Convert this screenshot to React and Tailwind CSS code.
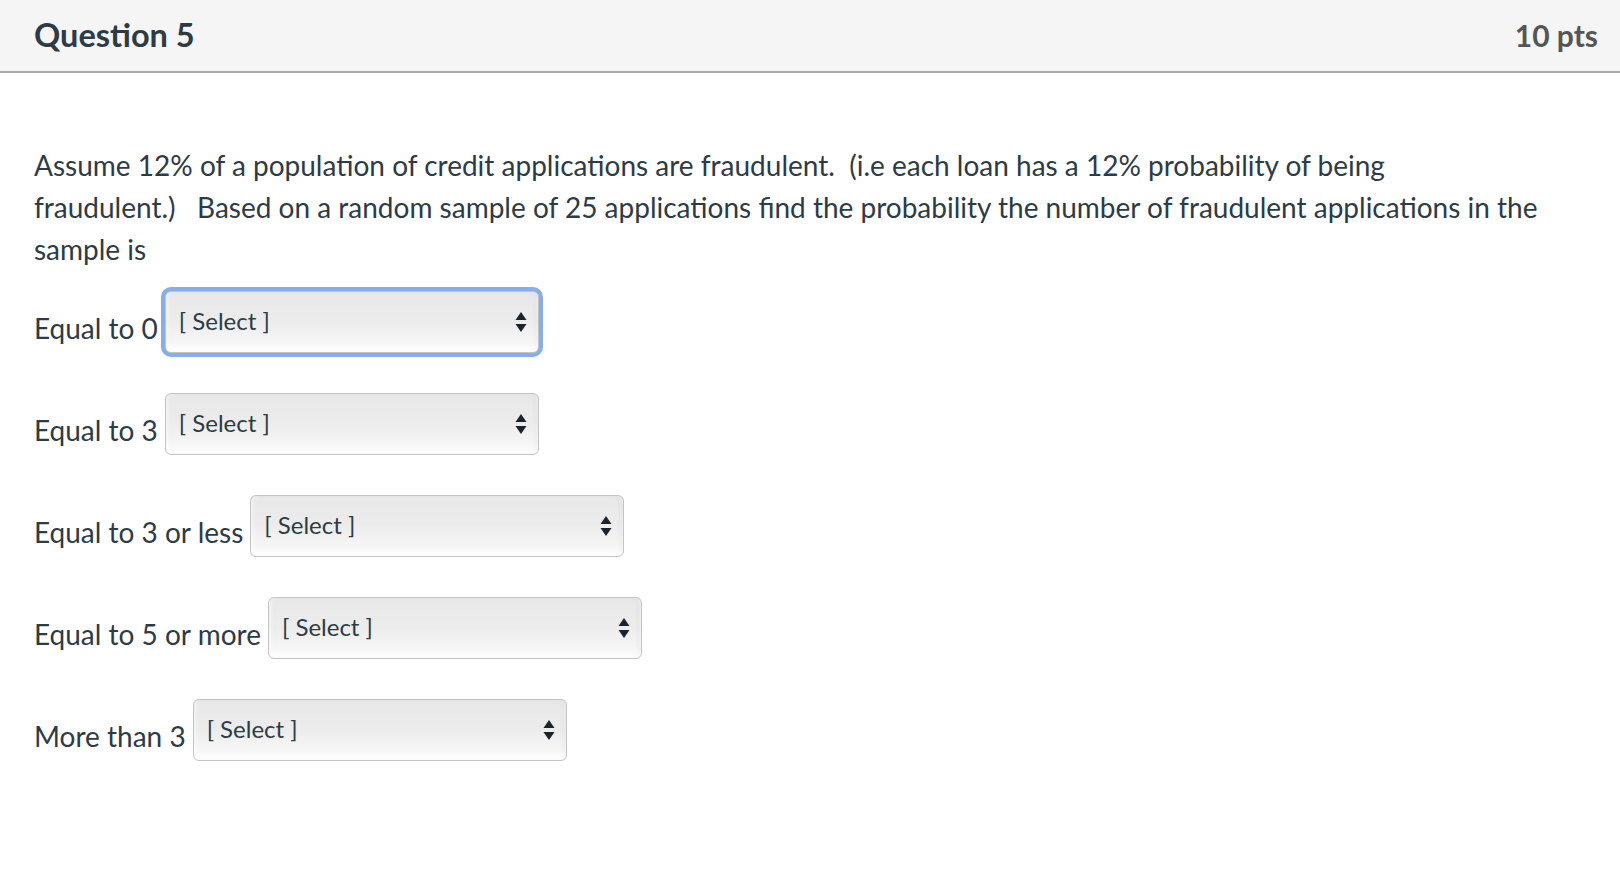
import React from 'react';

const ROWS = [
    { label: 'Equal to 0', focused: true },
    { label: 'Equal to 3' },
    { label: 'Equal to 3 or less' },
    { label: 'Equal to 5 or more' },
    { label: 'More than 3' },
];

const SortArrows = () => (
    <svg width="12" height="22" viewBox="0 0 12 22" className="shrink-0">
        <path d="M6 1 L11.5 9 L0.5 9 Z" fill="#1b242b" />
        <path d="M0.5 13 L11.5 13 L6 21 Z" fill="#1b242b" />
    </svg>
);

const FakeSelect = ({ focused }) => (
    <div className={`rounded-[10px] p-[4px] ${focused ? 'bg-[#86adf0]' : 'bg-transparent'}`}>
        <div className="w-[374px] h-[62px] flex items-center justify-between pl-[13px] pr-[11px] rounded-[6px] border border-[#c4c4c4] bg-gradient-to-b from-[#e8e8e8] via-[#ececec] to-[#fbfbfb] shadow-[inset_0_-3px_6px_rgba(255,255,255,0.9),inset_-3px_0_4px_rgba(0,0,0,0.06)]">
            <span className="text-[24px] text-[#2d3b45] -mt-[2px]">[ Select ]</span>
            <SortArrows />
        </div>
    </div>
);

export default function App() {
    return (
        <div className="min-h-[876px] bg-white font-['Lato','Open_Sans',sans-serif] text-[#2d3b45]">
            {/* Header */}
            <div className="h-[73px] bg-[#f5f5f5] border-b-2 border-[#a8a8a8] flex items-center justify-between pl-[34px] pr-[22px]">
                <h2 className="text-[32.5px] font-bold text-[#2d3b45]">Question 5</h2>
                <span className="text-[30px] font-bold text-[#555]">10 pts</span>
            </div>

            {/* Body */}
            <div className="px-[34px] pt-[71px]">
                <p className="text-[28px] leading-[42px]">
                    Assume 12% of a population of credit applications are fraudulent.&nbsp; (i.e each loan has a 12% probability of being fraudulent.)&nbsp;&nbsp;&nbsp;Based on a random sample of 25 applications find the probability the number of fraudulent applications in the sample is
                </p>

                <div className="mt-[17px] flex flex-col gap-[32px]">
                    {ROWS.map(row => (
                        <div key={row.label} className="flex items-center gap-[3px]">
                            <span className="text-[28px] mt-[12px]">{row.label}</span>
                            <FakeSelect focused={row.focused} />
                        </div>
                    ))}
                </div>
            </div>
        </div>
    );
}
